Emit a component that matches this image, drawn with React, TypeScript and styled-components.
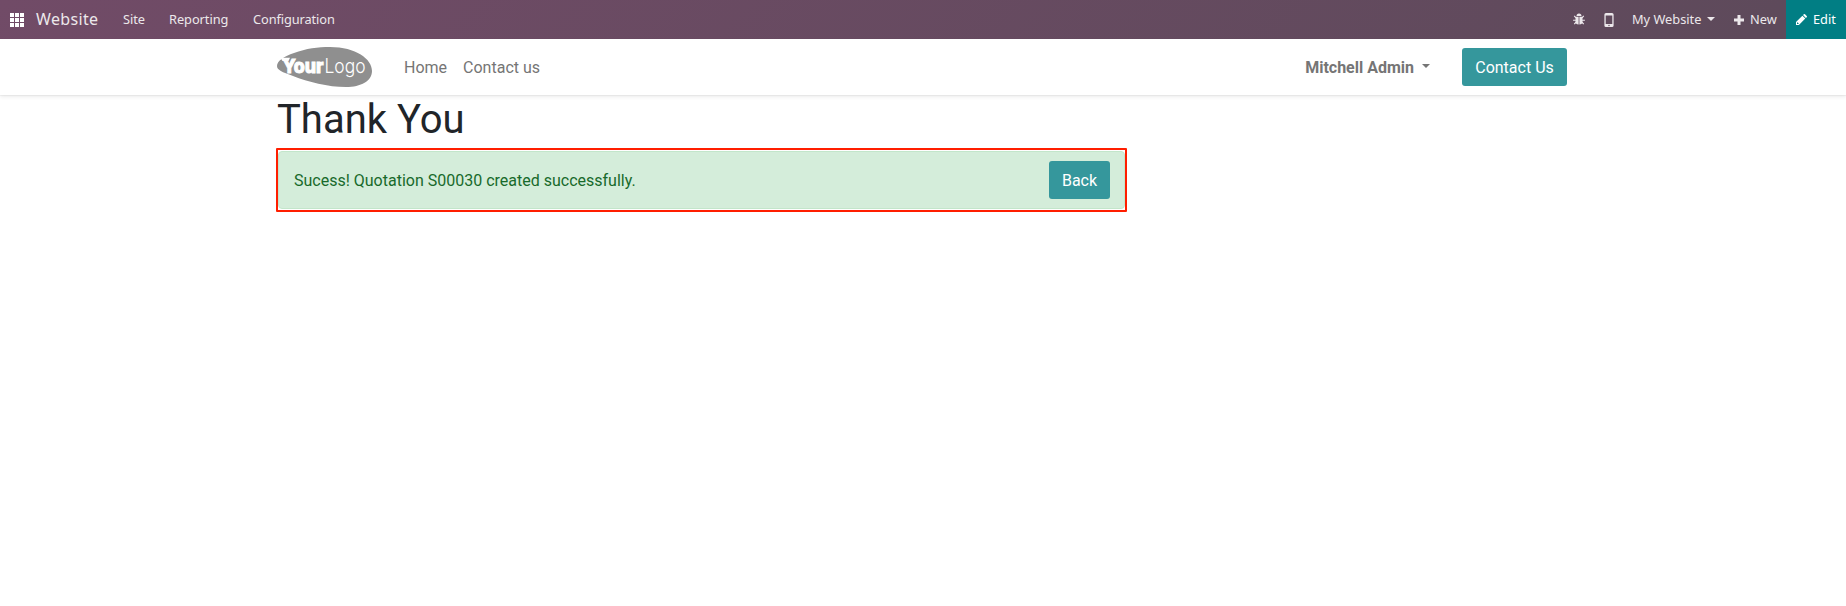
import React from "react";
import styled, { createGlobalStyle } from "styled-components";

const Global = createGlobalStyle`
  * { box-sizing: border-box; }
  body { margin: 0; background: #fff; color: #212529; font: 400 16px/24px Roboto, sans-serif; }
  h1 { margin: 0; }
  button { font: inherit; }
`;

const TopBar = styled.nav`
  display: flex;
  height: 39px;
  padding-left: 10px;
  align-items: center;
  background: linear-gradient(135deg, #714b67 0%, #5e4a5b 95%);
  color: #ece8eb;
  font: 400 13px/20px "Noto Sans", sans-serif;
`;
const Brand = styled.span`
  width: 87px;
  margin-left: 12px;
  padding-bottom: 2px;
  font-size: 16px;
  letter-spacing: 0.35px;
`;
const MenuItem = styled.span<{ $width: number; $track?: number }>`
  display: inline-flex;
  align-items: center;
  width: ${(p) => p.$width}px;
  padding-bottom: 2px;
  white-space: nowrap;
  font-size: 12.8px;
  letter-spacing: ${(p) => p.$track ?? 0}px;
`;
const Spacer = styled.div`flex: 1;`;
const Tool = styled.span<{ $width: number }>`
  display: inline-flex;
  width: ${(p) => p.$width}px;
`;
const EditButton = styled.button`
  display: flex;
  align-items: center;
  gap: 6px;
  width: 60px;
  height: 39px;
  padding: 0 0 1px 10px;
  border: 0;
  background: #017e84;
  color: #fff;
  font-size: 12.8px;
`;
const Caret = styled.i<{ $left: number; $size: number; $raise?: number }>`
  margin-left: ${(p) => p.$left}px;
  margin-bottom: ${(p) => p.$raise ?? 0}px;
  border: ${(p) => p.$size}px solid transparent;
  border-top-color: currentColor;
  border-bottom: 0;
`;

const Header = styled.header`
  display: flex;
  align-items: center;
  height: 56px;
  padding: 0 279px 0 277px;
  box-shadow: 0 2px 4px rgba(0, 0, 0, 0.075), 0 1px 1px rgba(0, 0, 0, 0.04);
  color: #757575;
`;
const NavLinks = styled.div`
  display: flex;
  gap: 16px;
  margin-left: 32px;
  padding-top: 2px;
`;
const UserMenu = styled.div`
  display: flex;
  align-items: center;
  margin-right: 32px;
  padding-top: 2px;
  font-weight: 700;
`;
const Button = styled.button<{ $width: number }>`
  width: ${(p) => p.$width}px;
  height: 38px;
  padding: 2px 0 0;
  border: 0;
  border-radius: 3px;
  background: #35979c;
  color: #fff;
`;

const Main = styled.main`
  width: 1127px;
  padding: 1px 0 0 276px;
`;
const Title = styled.h1`
  height: 52px;
  padding-left: 1px;
  font-size: 40px;
  font-weight: 400;
  line-height: 48px;
`;
const Frame = styled.div`
  padding: 1px 0;
  border: 2px solid #ff1e00;
  border-radius: 1px;
`;
const Alert = styled.div`
  display: flex;
  align-items: center;
  justify-content: space-between;
  height: 58px;
  padding: 0 14px 0 15px;
  border: 1px solid #c3e6cb;
  border-radius: 4px;
  background: #d4edda;
  color: #186a2b;
`;
const Message = styled.span`
  padding-top: 2px;
`;

const GridIcon = () => (
  <svg width="14" height="14" fill="#fff" shapeRendering="crispEdges">
    {[0, 5, 10].map((y) => [0, 5, 10].map((x) => <rect key={`${x}-${y}`} x={x} y={y} width="4" height="4" />))}
  </svg>
);
const BugIcon = () => (
  <svg width="12" height="13" viewBox="0 0 12 13" fill="currentColor">
    <path d="M3.500 3.100a2.500 2.600 0 0 1 5 0zM2.500 3.700h3.100v7.900a3.100 3.300 0 0 1-3.100-3.300zM6.400 3.700h3.100v4.600a3.100 3.300 0 0 1-3.100 3.300z" />
    <path d="M3 4.800 1.200 2.900M9 4.800l1.800-1.900M3 7.200H.1M9 7.200h2.900M3.200 9 1.300 11.200M8.800 9l1.900 2.200" stroke="currentColor" strokeWidth="1.150" />
  </svg>
);
const PhoneIcon = () => (
  <svg width="10" height="14" viewBox="0 0 10 14" fill="currentColor">
    <path fillRule="evenodd" d="M2 0h6Q9.600 0 9.600 1.600v10.800Q9.600 14 8 14H2Q.4 14 .4 12.400V1.600Q.4 0 2 0zM1.700 2.400v8.600H8.300V2.400zM4.300 12.500a.7.7 0 1 0 1.400 0 .7.7 0 0 0-1.400 0z" />
  </svg>
);
const PlusIcon = () => (
  <svg width="10" height="10" fill="currentColor">
    <path d="M3.500 0h3v3.500H10v3H6.500V10h-3V6.500H0v-3h3.500z" />
  </svg>
);
const PencilIcon = () => (
  <svg width="11" height="11" viewBox="0 0 11 11" fill="currentColor">
    <path fillRule="evenodd" d="m6.400 1.700 2.900 2.900L2.900 11H0V8.100zM1 8.700v1.300h1.300l.5-.5-1.300-1.300zM7 1.100 7.800.3q.6-.6 1.200 0l1.700 1.700q.6.600 0 1.200l-.8.8z" />
  </svg>
);
const Logo = () => (
  <svg width="95" height="41" viewBox="0 0 95 41">
    <path d="M0 19C0 14 7 9.500 17 6C29 1.500 41 0 53 0C79 0 95 12 95 24C95 34 84 40 69 40C51 40 31 35 16 29C5 25 0 23 0 19Z" fill="#8f8f8f" />
    <path d="M3.500 10.800H13L11.500 14H5.500Z" fill="#fff" />
    <text x="5.500" y="25.500" fill="#fff" stroke="#fff" strokeWidth=".9" fontFamily="Inter" fontWeight="800" fontSize="19" textLength="41" lengthAdjust="spacingAndGlyphs">Your</text>
    <text x="47.500" y="25.500" fill="#fff" fontFamily="Inter" fontWeight="300" fontSize="19.500" textLength="41" lengthAdjust="spacingAndGlyphs">Logo</text>
  </svg>
);

export default function App() {
  return (
    <>
      <Global />
      <TopBar>
        <GridIcon />
        <Brand>Website</Brand>
        <MenuItem $width={46} $track={-0.1}>Site</MenuItem>
        <MenuItem $width={84} $track={-0.05}>Reporting</MenuItem>
        <MenuItem $width={90} $track={-0.1}>Configuration</MenuItem>
        <Spacer />
        <Tool $width={31}><BugIcon /></Tool>
        <Tool $width={28}><PhoneIcon /></Tool>
        <MenuItem $width={102}>My Website<Caret $left={6} $size={4} /></MenuItem>
        <Tool $width={16}><PlusIcon /></Tool>
        <MenuItem $width={36}>New</MenuItem>
        <EditButton><PencilIcon />Edit</EditButton>
      </TopBar>
      <Header>
        <Logo />
        <NavLinks><span>Home</span><span>Contact us</span></NavLinks>
        <Spacer />
        <UserMenu>Mitchell Admin<Caret $left={8} $size={4} $raise={4} /></UserMenu>
        <Button $width={105}>Contact Us</Button>
      </Header>
      <Main>
        <Title>Thank You</Title>
        <Frame>
          <Alert>
            <Message>Sucess! Quotation S00030 created successfully.</Message>
            <Button $width={61}>Back</Button>
          </Alert>
        </Frame>
      </Main>
    </>
  );
}
